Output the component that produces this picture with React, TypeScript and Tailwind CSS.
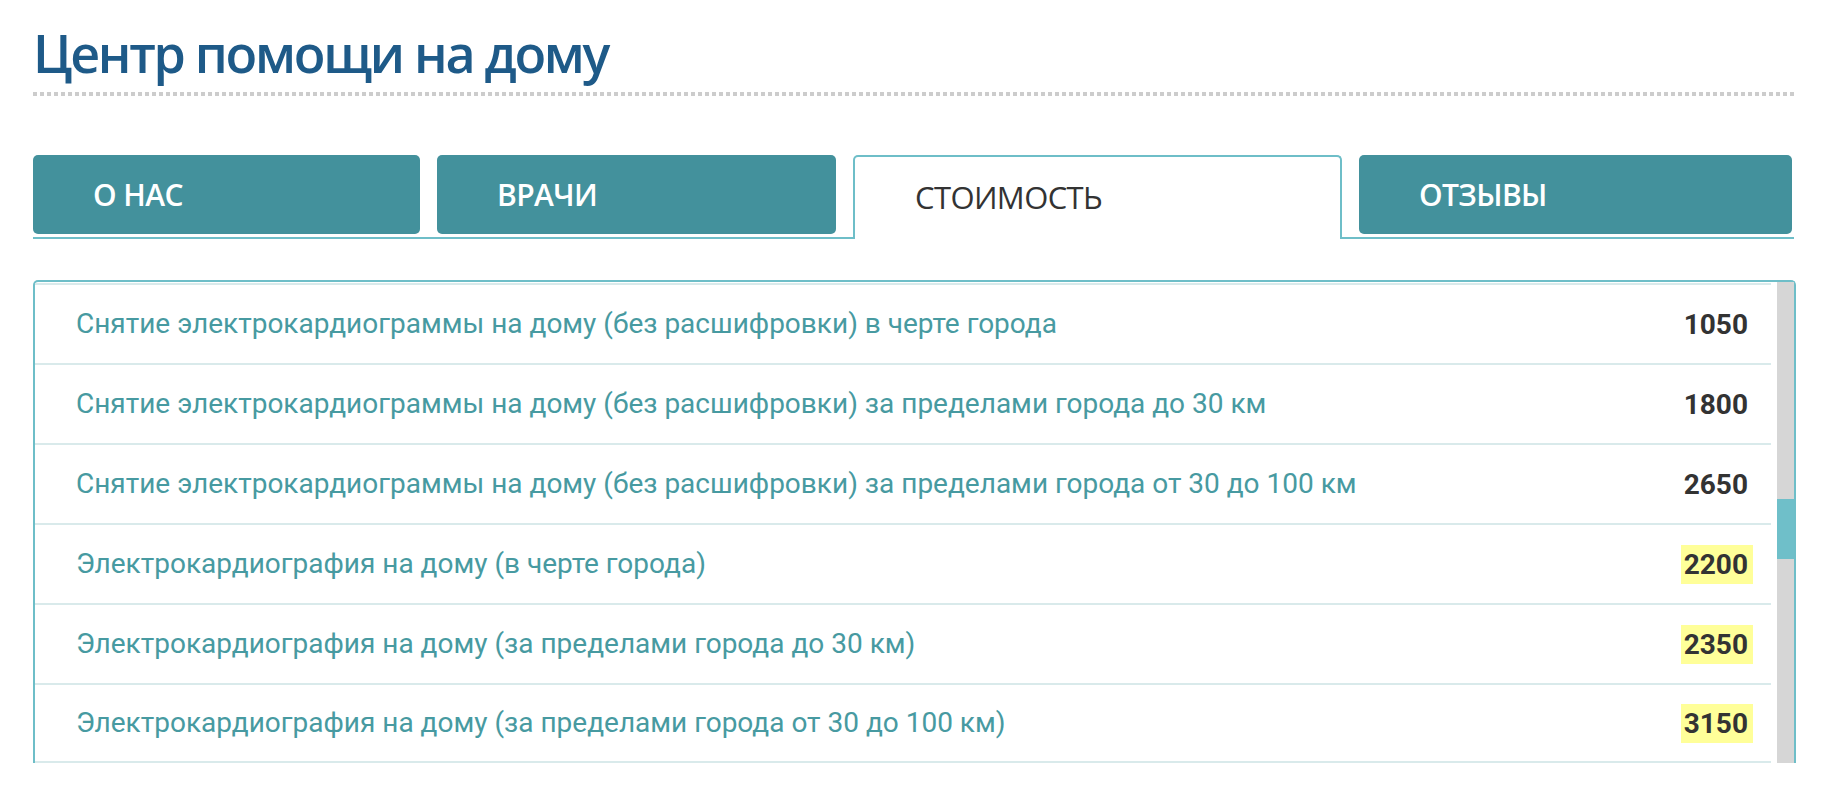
const TABS = [
  { label: 'О НАС', width: 'w-[387px]' },
  { label: 'ВРАЧИ', width: 'w-[399px]' },
  { label: 'СТОИМОСТЬ', width: 'w-[489px]', active: true },
  { label: 'ОТЗЫВЫ', width: 'w-[433px]' },
];

const PRICES = [
  { name: 'Снятие электрокардиограммы на дому (без расшифровки) в черте города', price: '1050' },
  { name: 'Снятие электрокардиограммы на дому (без расшифровки) за пределами города до 30 км', price: '1800' },
  { name: 'Снятие электрокардиограммы на дому (без расшифровки) за пределами города от 30 до 100 км', price: '2650' },
  { name: 'Электрокардиография на дому (в черте города)', price: '2200', hot: true },
  { name: 'Электрокардиография на дому (за пределами города до 30 км)', price: '2350', hot: true },
  { name: 'Электрокардиография на дому (за пределами города от 30 до 100 км)', price: '3150', hot: true },
];

export default function App() {
  return (
    <div className="min-h-screen bg-white pl-[33px] pt-[19px]">
      <div className="w-[1763px]">
        <h1 className="font-['Open_Sans',sans-serif] text-[52px] font-semibold leading-[68px] text-[#1e5a88] tracking-[-2.3px]">
          Центр помощи на дому
        </h1>
        <div className="mt-[5px] h-[4px] w-[1761px] bg-[repeating-linear-gradient(90deg,#cccccc_0px,#cccccc_4px,transparent_4px,transparent_7px)]" />

        {/* tabs */}
        <div className="mt-[59px] flex h-[84px] w-[1761px] items-start gap-[17px] border-b-2 border-[#6ebec8]">
          {TABS.map(tab =>
            tab.active ? (
              <div
                key={tab.label}
                className={`${tab.width} relative flex h-[84px] shrink-0 items-center rounded-t-[5px] border-x-2 border-t-2 border-[#6ebec8] bg-white pl-[60px] pb-[2px]`}
              >
                <span className="font-['Open_Sans',sans-serif] text-[31px] text-[#333333] tracking-[-0.6px]">{tab.label}</span>
              </div>
            ) : (
              <div
                key={tab.label}
                className={`${tab.width} flex h-[79px] shrink-0 items-center rounded-[5px] bg-[#43919c] pl-[60px]`}
              >
                <span className="font-['Open_Sans',sans-serif] text-[30px] font-semibold text-white tracking-[-0.6px]">{tab.label}</span>
              </div>
            )
          )}
        </div>

        {/* price list */}
        <div className="mt-[41px] flex w-[1763px] rounded-t-[5px] border-x-2 border-t-2 border-[#6ebec8]">
          <div className="w-[1736px] shrink-0 pt-[1px]">
            {PRICES.map((row, i) => (
              <div
                key={row.name}
                className={`flex h-[80px] items-center justify-between border-t-2 border-[#d9eaeb] pl-[41px] pr-[18px] ${i === PRICES.length - 1 ? 'border-b-2' : ''}`}
              >
                <span className="font-['Roboto',sans-serif] text-[28px] text-[#479aa1]">{row.name}</span>
                <span
                  className={`font-['Roboto',sans-serif] text-[28px] font-bold leading-[39px] text-[#333333] pl-[3px] pr-[5px] ${row.hot ? 'bg-[#ffff99]' : ''}`}
                >
                  {row.price}
                </span>
              </div>
            ))}
          </div>
          <div className="ml-[6px] w-[17px] shrink-0 bg-[#d6d6d6] pt-[217px]">
            <div className="h-[60px] w-full bg-[#6fbfc9]" />
          </div>
        </div>
      </div>
    </div>
  );
}
